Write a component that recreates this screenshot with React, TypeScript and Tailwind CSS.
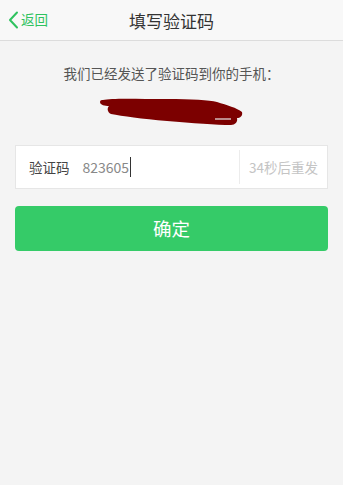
import React from "react";

export default function App() {
  const font = { fontFamily: '"Noto Sans CJK SC", "Noto Sans", sans-serif' };
  return (
    <div className="w-[343px] h-[485px] bg-[#f4f4f4] flex flex-col" style={font}>
      <div className="relative h-[41px] bg-[#f8f8f8] border-b border-[#dcdcdc] flex items-center justify-center shrink-0">
        <div className="absolute left-[8px] top-0 h-full flex items-center text-[#2fc25f]">
          <svg width="11" height="18" viewBox="0 0 11 18" className="mr-[2px]">
            <path d="M9 1.5 L2 9 L9 16.5" fill="none" stroke="#2fc25f" strokeWidth="2" strokeLinecap="round" strokeLinejoin="round" />
          </svg>
          <span className="text-[13.5px] leading-none">返回</span>
        </div>
        <span className="text-[17px] text-[#333] leading-none">填写验证码</span>
      </div>

      <div className="mt-[23px] text-center text-[13.5px] leading-[18px] text-[#555]">我们已经发送了验证码到你的手机：</div>

      <div className="flex justify-center mt-[14px]">
        <svg width="150" height="32" viewBox="0 0 150 32">
          <path
            d="M6 4 C 14 2, 40 3, 70 3 C 95 3, 112 4, 120 6 C 130 9, 140 12, 145 16 C 146 20, 143 22, 140 22 C 141 26, 138 29, 134 29 C 120 29, 95 27, 70 25 C 45 23, 25 20, 14 18 C 10 16, 10 12, 12 10 C 8 10, 3 9, 3 6 C 3 4, 5 4, 6 4 Z"
            fill="#7c0000"
          />
          <path d="M118 23 L134 23" stroke="#e8e8e8" strokeWidth="1.2" />
        </svg>
      </div>

      <div className="mx-[15px] mt-[17px] h-[44px] bg-white border border-[#e6e6e6] flex items-center">
        <span className="ml-[13px] text-[13.5px] text-[#444]">验证码</span>
        <span className="ml-[13px] text-[14px] text-[#888] flex items-center">
          823605
          <span className="inline-block w-[1px] h-[20px] bg-[#333] ml-[1px]" />
        </span>
        <div className="ml-auto h-[34px] w-[1px] bg-[#ececec]" />
        <span className="w-[87px] text-center text-[13.5px] text-[#c4c4c4]">34秒后重发</span>
      </div>

      <div className="mx-[15px] mt-[17px] h-[45px] rounded-[4px] bg-[#35cb68] flex items-center justify-center text-white text-[18.5px]">
        确定
      </div>
    </div>
  );
}
